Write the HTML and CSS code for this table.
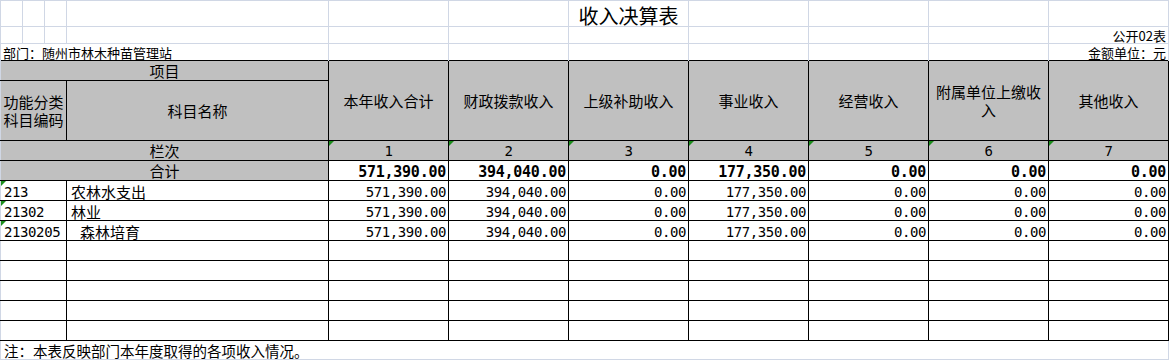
FILE: index.html
```html
<!DOCTYPE html>
<html lang="zh-CN">
<head>
<meta charset="utf-8">
<title>收入决算表</title>
<link rel="stylesheet" href="styles.css">
</head>
<body>
<table class="sheet">
  <colgroup>
    <col class="w22"><col class="w22"><col class="w22"><col class="w262">
    <col class="w120"><col class="w120"><col class="w120"><col class="w120">
    <col class="w120"><col class="w120"><col class="w120">
  </colgroup>
  <tr class="r-title">
    <td class="g first"></td><td class="g"></td><td class="g"></td><td class="g"></td>
    <td class="g"></td><td class="g"></td>
    <td class="g title">收入决算表</td>
    <td class="g"></td><td class="g"></td><td class="g"></td><td class="g last"></td>
  </tr>
  <tr class="r-info">
    <td class="g first"></td><td class="g"></td><td class="g"></td><td class="g"></td>
    <td class="g"></td><td class="g"></td><td class="g"></td><td class="g"></td>
    <td class="g"></td><td class="g"></td>
    <td class="g last info right">公开02表</td>
  </tr>
  <tr class="r-info">
    <td class="g first info dept" colspan="4">部门：随州市林木种苗管理站</td>
    <td class="g nb"></td><td class="g nb"></td><td class="g nb"></td><td class="g nb"></td>
    <td class="g nb"></td><td class="g nb"></td>
    <td class="g last nb info right">金额单位：元</td>
  </tr>
  <tr class="r-h1">
    <td class="m hd first" colspan="4">项目</td>
    <td class="m hd tall" rowspan="2">本年收入合计</td>
    <td class="m hd tall" rowspan="2">财政拨款收入</td>
    <td class="m hd tall" rowspan="2">上级补助收入</td>
    <td class="m hd tall" rowspan="2">事业收入</td>
    <td class="m hd tall" rowspan="2">经营收入</td>
    <td class="m hd tall" rowspan="2">附属单位上缴收入</td>
    <td class="m hd tall" rowspan="2">其他收入</td>
  </tr>
  <tr class="r-h2">
    <td class="m hd tall first" colspan="3">功能分类科目编码</td>
    <td class="m hd tall">科目名称</td>
  </tr>
  <tr class="r-row">
    <td class="m hd first" colspan="4">栏次</td>
    <td class="m hd n tri">1</td>
    <td class="m hd n tri">2</td>
    <td class="m hd n tri">3</td>
    <td class="m hd n tri">4</td>
    <td class="m hd n tri">5</td>
    <td class="m hd n tri">6</td>
    <td class="m hd n tri">7</td>
  </tr>
  <tr class="r-row sum">
    <td class="m hd first" colspan="4">合计</td>
    <td class="m n num">571,390.00</td>
    <td class="m n num">394,040.00</td>
    <td class="m n num">0.00</td>
    <td class="m n num">177,350.00</td>
    <td class="m n num">0.00</td>
    <td class="m n num">0.00</td>
    <td class="m n num">0.00</td>
  </tr>
  <tr class="r-row">
    <td class="m first n code tri" colspan="3">213</td>
    <td class="m name">农林水支出</td>
    <td class="m n num">571,390.00</td>
    <td class="m n num">394,040.00</td>
    <td class="m n num">0.00</td>
    <td class="m n num">177,350.00</td>
    <td class="m n num">0.00</td>
    <td class="m n num">0.00</td>
    <td class="m n num">0.00</td>
  </tr>
  <tr class="r-row">
    <td class="m first n code tri" colspan="3">21302</td>
    <td class="m name">林业</td>
    <td class="m n num">571,390.00</td>
    <td class="m n num">394,040.00</td>
    <td class="m n num">0.00</td>
    <td class="m n num">177,350.00</td>
    <td class="m n num">0.00</td>
    <td class="m n num">0.00</td>
    <td class="m n num">0.00</td>
  </tr>
  <tr class="r-row">
    <td class="m first n code tri" colspan="3">2130205</td>
    <td class="m name indent">森林培育</td>
    <td class="m n num">571,390.00</td>
    <td class="m n num">394,040.00</td>
    <td class="m n num">0.00</td>
    <td class="m n num">177,350.00</td>
    <td class="m n num">0.00</td>
    <td class="m n num">0.00</td>
    <td class="m n num">0.00</td>
  </tr>
  <tr class="r-row">
    <td class="m first" colspan="3"></td><td class="m"></td>
    <td class="m"></td><td class="m"></td><td class="m"></td><td class="m"></td>
    <td class="m"></td><td class="m"></td><td class="m"></td>
  </tr>
  <tr class="r-row">
    <td class="m first" colspan="3"></td><td class="m"></td>
    <td class="m"></td><td class="m"></td><td class="m"></td><td class="m"></td>
    <td class="m"></td><td class="m"></td><td class="m"></td>
  </tr>
  <tr class="r-row">
    <td class="m first" colspan="3"></td><td class="m"></td>
    <td class="m"></td><td class="m"></td><td class="m"></td><td class="m"></td>
    <td class="m"></td><td class="m"></td><td class="m"></td>
  </tr>
  <tr class="r-row">
    <td class="m first" colspan="3"></td><td class="m"></td>
    <td class="m"></td><td class="m"></td><td class="m"></td><td class="m"></td>
    <td class="m"></td><td class="m"></td><td class="m"></td>
  </tr>
  <tr class="r-row">
    <td class="m first" colspan="3"></td><td class="m"></td>
    <td class="m"></td><td class="m"></td><td class="m"></td><td class="m"></td>
    <td class="m"></td><td class="m"></td><td class="m"></td>
  </tr>
  <tr class="r-note">
    <td class="note" colspan="11">注：本表反映部门本年度取得的各项收入情况。</td>
  </tr>
</table>
</body>
</html>
```

FILE: styles.css
```css
* {
  box-sizing: border-box;
}

html, body {
  margin: 0;
  padding: 0;
  background: #ffffff;
}

body {
  font-family: "Noto Sans CJK SC", "Noto Sans", sans-serif;
  color: #000000;
}

.sheet {
  border-collapse: collapse;
  table-layout: fixed;
  width: 1169px;
  font-size: 15px;
  line-height: 15px;
}

.w22 { width: 22px; }
.w262 { width: 262px; }
.w120 { width: 120px; }

.sheet td {
  padding: 0 2px;
  line-height: 16px;
  vertical-align: bottom;
  white-space: nowrap;
}

/* light spreadsheet gridlines (rows above the table) */
.g {
  border-top: 1px solid #d0d7e5;
  border-left: 1px solid #d0d7e5;
  border-right: 1px solid #d0d7e5;
  border-bottom: none;
}

.r-title td { height: 26px; }
.r-info td { height: 17px; }
.r-h1 td { height: 20px; }
.r-h2 td { height: 60px; }
.r-row td { height: 20px; }
.r-note td { height: 19px; }

.sheet .title {
  font-size: 20px;
  line-height: 21px;
  text-align: center;
}

.sheet .info {
  font-size: 13px;
  line-height: 14px;
}

.right {
  text-align: right;
}

/* main table cells */
.m {
  border: 1px solid #000000;
}

.m.first {
  border-left: 1px solid #d0d7e5;
}

.sheet .hd {
  background: #c0c0c0;
  text-align: center;
  vertical-align: middle;
  white-space: normal;
  padding: 0 1px;
}

.sheet .hd.tall {
  line-height: 18px;
}

.n {
  font-family: "DejaVu Sans Mono", "Liberation Mono", monospace;
  font-size: 14px;
  letter-spacing: -0.4px;
}

.num {
  text-align: right;
}

.sum .num {
  font-weight: bold;
  font-size: 15px;
  letter-spacing: -0.25px;
}

.sheet .code {
  text-align: left;
  padding-left: 3px;
}

.sheet .name {
  text-align: left;
  padding-left: 4px;
}

.sheet .name.indent {
  padding-left: 13px;
}

.tri {
  position: relative;
}

.tri::before {
  content: "";
  position: absolute;
  left: 0;
  top: 0;
  border-top: 5px solid #1c8c1c;
  border-right: 5px solid transparent;
}

.sheet .note {
  border-left: 1px solid #d0d7e5;
  border-right: 1px solid #d0d7e5;
  border-bottom: 1px solid #d0d7e5;
  border-top: none;
  font-size: 14.5px;
  line-height: 16px;
  padding-left: 3px;
  text-align: left;
}
```
